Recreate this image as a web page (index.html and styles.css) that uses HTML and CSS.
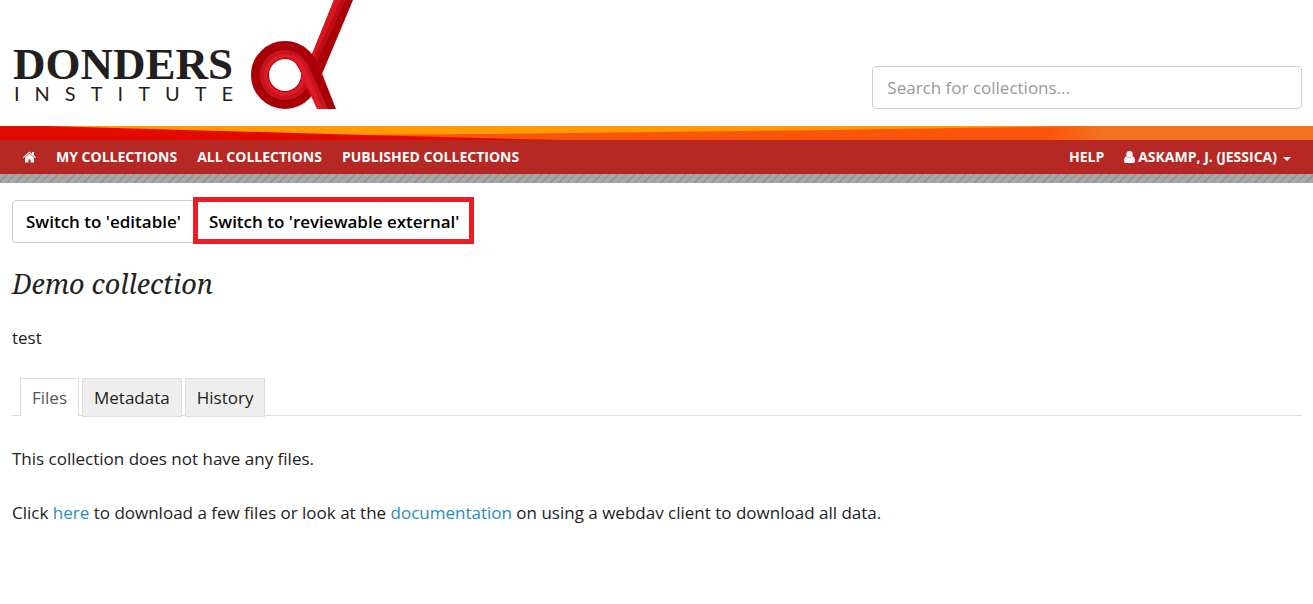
FILE: index.html
```html
<!DOCTYPE html>
<html lang="en">
<head>
<meta charset="utf-8">
<meta name="viewport" content="width=device-width, initial-scale=1">
<title>Demo collection - Donders Institute</title>
<link rel="stylesheet" href="styles.css">
</head>
<body>
<header class="masthead">
  <svg class="logo" width="360" height="109" viewBox="0 0 360 109" role="img" aria-label="Donders Institute">
    <text class="logo-name" x="13" y="79">DONDERS</text>
    <text class="logo-sub" x="14" y="101">INSTITUTE</text>
    <path d="M334 0H353L322 74L316 84L306 68L313 53Z" fill="#a90008"/>
    <path d="M334 0H346L315 66L309 60L313 53Z" fill="#bd0c16"/>
    <path d="M334 0H341L314 58L311 56Z" fill="#d8161f"/>
    <circle cx="285" cy="75" r="25" fill="none" stroke="#a90008" stroke-width="18"/>
    <circle cx="285" cy="75" r="21" fill="none" stroke="#c31420" stroke-width="8"/>
    <circle cx="285" cy="75" r="19" fill="none" stroke="#de1a24" stroke-width="4"/>
    <path d="M297 44Q314 50 321 71L336 109H318L302 74L290 54Z" fill="#a90008"/>
    <path d="M292 51Q304 55 309 67L328 109H318L302 74Q299 62 290 58Z" fill="#c31420"/>
    <path d="M291 54Q301 57 305 67L323 109H317L302 76Q299 62 290 58Z" fill="#de1a24"/>
  </svg>
  <form class="search">
    <input class="search-input" type="search" aria-label="Search for collections" placeholder="Search for collections...">
  </form>
</header>
<svg class="stripe" viewBox="0 0 1313 14" preserveAspectRatio="none" aria-hidden="true">
  <defs>
    <linearGradient id="flame"><stop offset="0.800" stop-color="#f9560b"/><stop offset="0.840" stop-color="#f37224"/></linearGradient>
  </defs>
  <path d="M0 0H1313V14H0Z" fill="url(#flame)"/>
  <path d="M0 0H1085L830 4L490 8L330 9L0 1Z" fill="#ff9c05"/>
  <path d="M0 0H45L330 8L560 14H0Z" fill="#e30b00"/>
</svg>
<nav class="navbar">
  <div class="nav-group">
    <a class="nav-link" href="#" aria-label="Home">
      <svg width="13" height="12" viewBox="0 0 13 12" fill="currentColor" aria-hidden="true"><path d="M0 6.200L6.500 0.500L9 2.700V1H11V4.400L13 6.200L12.300 7L6.500 2L0.700 7Z"/><path d="M2 6.600L6.500 2.700L11 6.600V11.500H7.600V8.500H5.400V11.500H2Z"/></svg>
    </a>
    <a class="nav-link" href="#">My collections</a>
    <a class="nav-link" href="#">All collections</a>
    <a class="nav-link" href="#">Published collections</a>
  </div>
  <div class="nav-group">
    <a class="nav-link" href="#">Help</a>
    <a class="nav-link nav-user" href="#">
      <svg width="11" height="12" viewBox="0 0 11 12" fill="currentColor" aria-hidden="true"><circle cx="5.500" cy="3.200" r="3.200"/><path d="M2.300 5.300Q5.500 8.300 8.700 5.300Q11 6 11 10Q11 12 9 12H2Q0 12 0 10Q0 6 2.300 5.300Z"/></svg>
      <span>Askamp, J. (Jessica)</span>
      <span class="caret"></span>
    </a>
  </div>
</nav>
<div class="texture"></div>
<main class="content">
  <div class="button-group">
    <button class="button" type="button">Switch to 'editable'</button>
    <button class="button button-marked" type="button">Switch to 'reviewable external'</button>
  </div>
  <h1 class="title">Demo collection</h1>
  <p class="text">test</p>
  <div class="tabs" role="tablist">
    <button class="tab tab-active" type="button" role="tab" aria-selected="true">Files</button>
    <button class="tab" type="button" role="tab" aria-selected="false">Metadata</button>
    <button class="tab" type="button" role="tab" aria-selected="false">History</button>
  </div>
  <p class="text">This collection does not have any files.</p>
  <p class="text">Click <a class="link" href="#">here</a> to download a few files or look at the <a class="link" href="#">documentation</a> on using a webdav client to download all data.</p>
</main>
</body>
</html>
```
FILE: styles.css
```css
* { box-sizing: border-box; }
body {
  margin: 0;
  background: #fff;
  color: #222;
  font-family: "Open Sans", sans-serif;
  font-size: 17px;
  line-height: 27px;
}
.masthead {
  display: flex;
  justify-content: space-between;
  align-items: flex-end;
  padding: 0 11px 17px 0;
}
.logo { display: block; flex: none; }
.logo-name {
  font-family: "Liberation Serif", serif;
  font-size: 45px;
  font-weight: 700;
  fill: #231f20;
}
.logo-sub {
  font-family: Lato, sans-serif;
  font-size: 20px;
  letter-spacing: 15px;
  fill: #231f20;
}
.search { width: 33%; }
.search-input {
  display: block;
  width: 100%;
  height: 43px;
  padding: 0 14px;
  border: 1px solid #ccc;
  border-radius: 4px;
  background: #fff;
  color: #222;
  font: inherit;
}
.search-input::placeholder { color: #999; opacity: 1; }
.stripe { display: block; width: 100%; height: 14px; }
.navbar {
  display: flex;
  justify-content: space-between;
  padding: 0 22px 0 23px;
  background: #b52823;
}
.nav-group { display: flex; gap: 20px; }
.nav-link {
  display: flex;
  align-items: center;
  gap: 3px;
  color: #fff;
  font-size: 14px;
  font-weight: 700;
  line-height: 34px;
  text-decoration: none;
  text-transform: uppercase;
}
.caret {
  margin: 4px 0 0 3px;
  border: 4px solid transparent;
  border-top-color: #fff;
  border-bottom: 0;
}
.texture {
  height: 9px;
  background: repeating-linear-gradient(135deg, #aaa6a3 0 4px, #989491 5px 6px);
}
.content { padding: 17px 11px 0 12px; }
.button-group { display: flex; }
.button {
  height: 43px;
  padding: 0 13px;
  border: 1px solid #ccc;
  border-radius: 4px 0 0 4px;
  background: #fff;
  color: #000;
  font: inherit;
  font-weight: 600;
}
.button-marked {
  position: relative;
  margin-left: -1px;
  padding: 0 14px;
  border-radius: 0 4px 4px 0;
}
.button-marked::after {
  content: "";
  position: absolute;
  inset: -4px -1px -2px -2px;
  border: 5px solid #ed1c24;
}
.title {
  margin: 22px 0 21px;
  font-family: "Droid Serif", "Noto Serif", "DejaVu Serif Condensed", serif;
  font-size: 27px;
  font-style: italic;
  font-weight: 400;
  line-height: 38px;
}
.text { margin: 0 0 27px; }
.tabs {
  display: flex;
  gap: 3px;
  margin-bottom: 29px;
  padding-left: 8px;
  border-bottom: 1px solid #ddd;
}
.tab {
  height: 39px;
  margin-bottom: -2px;
  padding: 0 11px;
  border: 1px solid #ddd;
  background: #eee;
  color: #222;
  font: inherit;
}
.tab-active {
  border-bottom-color: #fff;
  background: #fff;
  color: #555;
}
.link { color: #2a8bbf; text-decoration: none; }
```
